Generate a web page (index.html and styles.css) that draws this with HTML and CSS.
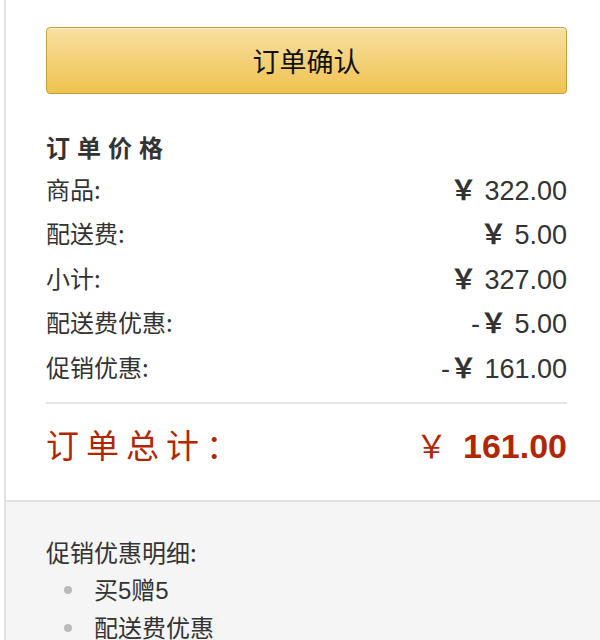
FILE: index.html
```html
<!DOCTYPE html>
<html>
<head>
  <meta charset="utf-8">
  <title>订单确认</title>
  <link rel="stylesheet" href="styles.css">
</head>
<body>
  <div class="order-page">
    <div class="summary">
      <button class="confirm-btn" type="button">订单确认</button>

      <h3 class="price-title">订单价格</h3>
      <div class="price-row">
        <span class="label">商品:</span>
        <span class="amount"><span class="cur">￥</span> 322.00</span>
      </div>
      <div class="price-row">
        <span class="label">配送费:</span>
        <span class="amount"><span class="cur">￥</span> 5.00</span>
      </div>
      <div class="price-row">
        <span class="label">小计:</span>
        <span class="amount"><span class="cur">￥</span> 327.00</span>
      </div>
      <div class="price-row">
        <span class="label">配送费优惠:</span>
        <span class="amount">-<span class="cur">￥</span> 5.00</span>
      </div>
      <div class="price-row">
        <span class="label">促销优惠:</span>
        <span class="amount">-<span class="cur">￥</span> 161.00</span>
      </div>

      <div class="total-row">
        <span class="total-label">订单总计：</span>
        <span class="total-amount"><span class="cur">￥</span> 161.00</span>
      </div>
    </div>

    <div class="promo-detail">
      <div class="promo-title">促销优惠明细:</div>
      <ul class="promo-list">
        <li>买<span class="num">5</span>赠<span class="num">5</span></li>
        <li>配送费优惠</li>
      </ul>
    </div>
  </div>
</body>
</html>
```

FILE: styles.css
```css
body {
  margin: 0;
  font-family: "Noto Sans CJK SC", "Liberation Sans", sans-serif;
  color: #333;
  background-color: #fff;
}

.order-page {
  margin-left: 4px;
  border-left: 2px solid #e2e2e2;
  min-height: 640px;
}

.summary {
  padding: 27px 33px 16px 40px;
}

.confirm-btn {
  display: block;
  width: 100%;
  height: 67px;
  border: 1px solid #c59f3a;
  border-radius: 4px;
  background: linear-gradient(to bottom, #f8e0a2, #f0c24f);
  box-shadow: inset 0 1px 0 rgba(255, 255, 255, 0.5);
  font-family: "Noto Sans CJK SC", sans-serif;
  font-size: 27px;
  color: #111;
  cursor: pointer;
}

.price-title {
  margin: 34px 0 0;
  height: 38px;
  line-height: 38px;
  font-size: 24px;
  font-weight: bold;
  letter-spacing: 7px;
  color: #333;
}

.price-row {
  display: flex;
  justify-content: space-between;
  align-items: center;
  height: 44.5px;
  font-size: 24px;
}

.price-row .amount {
  font-family: "Liberation Sans", "Noto Sans CJK SC", sans-serif;
  font-size: 27px;
  color: #333;
}

.cur {
  font-family: "Noto Sans CJK SC", sans-serif;
  font-size: 27px;
  font-weight: bold;
}

.total-row {
  display: flex;
  justify-content: space-between;
  align-items: center;
  margin-top: 13px;
  border-top: 2px solid #e6e6e6;
  height: 80px;
  color: #b12704;
}

.total-label {
  font-size: 33px;
  letter-spacing: 7px;
}

.total-amount {
  font-family: "Liberation Sans", sans-serif;
  font-weight: bold;
  font-size: 34px;
}

.total-amount .cur {
  font-size: 32px;
  font-weight: normal;
  margin-right: 6px;
}

.promo-detail {
  border-top: 2px solid #e2e2e2;
  background-color: #f5f5f5;
  padding: 32px 33px 0 40px;
  min-height: 140px;
}

.promo-title {
  height: 36px;
  line-height: 36px;
  font-size: 24px;
}

.promo-list {
  list-style-type: none;
  margin: 0;
  padding: 0 0 0 48px;
}

.promo-list li {
  position: relative;
  height: 38px;
  line-height: 38px;
  font-size: 24px;
}

.promo-list li::before {
  content: "";
  position: absolute;
  left: -30px;
  top: 16px;
  width: 8px;
  height: 8px;
  border-radius: 50%;
  background-color: #bbb;
}

.promo-list .num {
  font-family: "Liberation Sans", sans-serif;
}
```
